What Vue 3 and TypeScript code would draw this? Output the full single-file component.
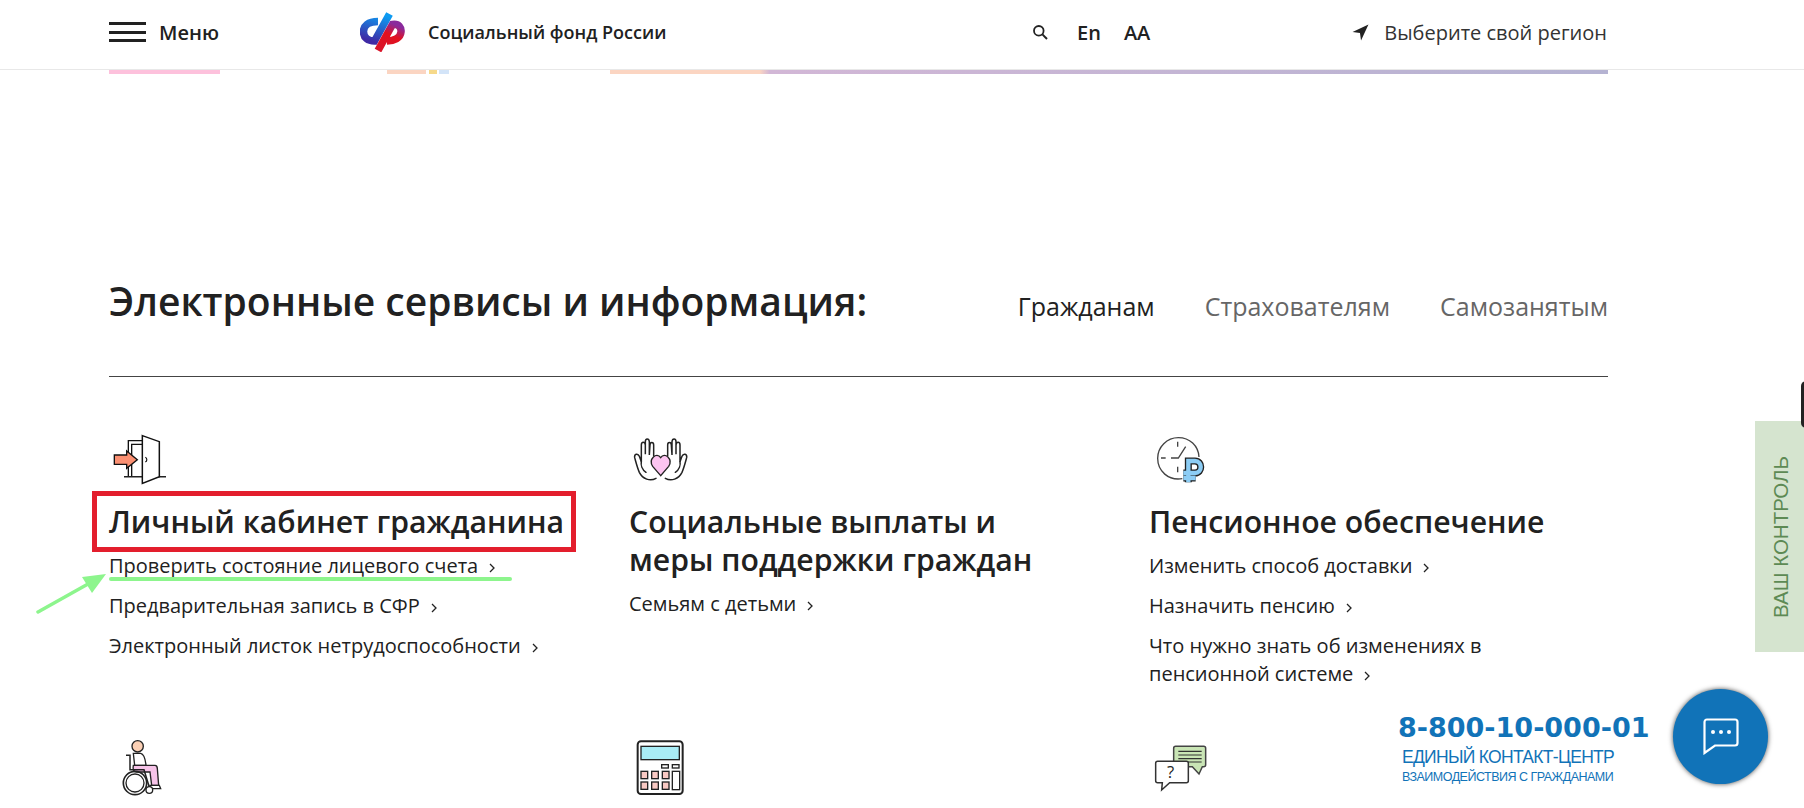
<script setup lang="ts">
interface Service {
  icon: string
  title: string[]
  links: string[][]
  marked?: boolean
}

const services: Service[] = [
  {
    icon: 'door',
    title: ['Личный кабинет гражданина'],
    links: [['Проверить состояние лицевого счета'], ['Предварительная запись в СФР'], ['Электронный листок нетрудоспособности']],
    marked: true,
  },
  {
    icon: 'hands',
    title: ['Социальные выплаты и', 'меры поддержки граждан'],
    links: [['Семьям с детьми']],
  },
  {
    icon: 'clock',
    title: ['Пенсионное обеспечение'],
    links: [['Изменить способ доставки'], ['Назначить пенсию'], ['Что нужно знать об изменениях в', 'пенсионной системе']],
  },
]

const tabs = ['Гражданам', 'Страхователям', 'Самозанятым']
const calcKeys = [63, 95, 127].flatMap((x) => [130, 162].map((y) => ({ x, y })))
</script>

<template>
  <div class="page">
    <header class="topbar">
      <div class="topbar-inner">
        <div class="menu">
          <span class="burger"><i></i><i></i><i></i></span>
          <span>Меню</span>
        </div>
        <div class="brand">
          <svg class="logo" viewBox="0 0 45 40" width="45" height="40">
            <defs>
              <linearGradient id="logo-blue" x1="0.6" y1="0" x2="0.3" y2="1">
                <stop offset="0" stop-color="#0d9bf2" />
                <stop offset="1" stop-color="#3f2aa5" />
              </linearGradient>
              <linearGradient id="logo-red" x1="0.7" y1="0" x2="0.3" y2="1">
                <stop offset="0" stop-color="#8a2a9c" />
                <stop offset="0.4" stop-color="#e3101f" />
                <stop offset="1" stop-color="#d9152a" />
              </linearGradient>
            </defs>
            <path d="M18 9.500 C8 9.500 3.500 14 3.500 19.500 C3.500 26 8 29 14.500 29 L29.500 2" fill="none" stroke="url(#logo-blue)" stroke-width="7.500" />
            <path d="M18 38.500 L32.500 12.500 C39 11.500 41.500 16 41 20 C40.500 26 34 29 27 29" fill="none" stroke="url(#logo-red)" stroke-width="7.500" />
          </svg>
          <span>Социальный фонд России</span>
        </div>
        <div class="tools">
          <svg viewBox="0 0 16 16" width="16" height="16">
            <circle cx="6.800" cy="6.800" r="4.800" fill="none" stroke="#222" stroke-width="1.800" />
            <path d="M10.400 10.400 L15 15" stroke="#222" stroke-width="2" />
          </svg>
          <span class="lang">En</span>
          <span class="lang">АА</span>
        </div>
        <div class="region">
          <svg viewBox="0 0 16 16" width="17" height="17">
            <path d="M15.500 0.500 L0.500 7.500 L7.500 8.500 L8.500 15.500 Z" fill="#222" />
          </svg>
          <span>Выберите свой регион</span>
        </div>
      </div>
    </header>

    <div class="strip">
      <span class="seg seg-pink"></span>
      <span class="seg seg-peach"></span>
      <span class="seg-badge"><i></i><b></b></span>
      <span class="seg seg-long"></span>
    </div>

    <main class="content">
      <div class="section-head">
        <h2>Электронные сервисы и информация:</h2>
        <nav class="tabs">
          <a v-for="(tab, i) in tabs" :key="tab" :class="{ active: i === 0 }">{{ tab }}</a>
        </nav>
      </div>

      <div class="grid">
        <section v-for="item in services" :key="item.icon" class="service">
          <svg v-if="item.icon === 'door'" class="pic" viewBox="0 0 240 195" width="80" height="65">
            <path d="M85 155 V47 H127 M95 155 V58 H127" fill="none" stroke="#111" stroke-width="4" />
            <path d="M72 155 H198" stroke="#222" stroke-width="4.500" />
            <path d="M127 32 L178 50 V155 L127 175 Z" fill="#fff" stroke="#111" stroke-width="4.500" />
            <path d="M136 97 C142 100 142 108 136 111" fill="none" stroke="#111" stroke-width="3.500" />
            <path d="M43 90 H80 V78 L112 104 L80 130 V118 H43 Z" fill="#fb9072" stroke="#111" stroke-width="4" />
          </svg>

          <svg v-else-if="item.icon === 'hands'" class="pic" viewBox="0 0 240 195" width="80" height="65">
            <g fill="none" stroke="#222" stroke-width="4.500" stroke-linecap="round">
              <path d="M108 160 C90 170 68 162 58 142 C52 128 48 112 44 98 C42 86 54 84 58 94 L64 110 L64 60 C64 49 75 49 76 60 L76 88 L76 50 C76 39 87 39 88 50 L88 90 L90 60 C90 50 101 50 101 60 L101 92" />
              <path d="M64 110 C62 120 66 134 78 142" />
            </g>
            <g fill="none" stroke="#222" stroke-width="4.500" stroke-linecap="round" transform="translate(244 0) scale(-1 1)">
              <path d="M108 160 C90 170 68 162 58 142 C52 128 48 112 44 98 C42 86 54 84 58 94 L64 110 L64 60 C64 49 75 49 76 60 L76 88 L76 50 C76 39 87 39 88 50 L88 90 L90 60 C90 50 101 50 101 60 L101 92" />
              <path d="M64 110 C62 120 66 134 78 142" />
            </g>
            <path d="M122 152 L98 124 C84 102 110 80 122 98 C134 80 160 102 146 124 Z" fill="#fcc4f0" stroke="#222" stroke-width="4" />
          </svg>

          <svg v-else class="pic pic-clock" viewBox="0 0 240 195" width="80" height="65">
            <path d="M112 161 C70 168 38 138 38 100 C38 66 66 38 100 38 C134 38 160 62 162 96" fill="none" stroke="#444" stroke-width="4" />
            <path d="M98 50 V65 M48 99 H62 M98 125 V142 M78 99 H100 L122 65" fill="none" stroke="#444" stroke-width="4" />
            <path d="M130 172 V108 H150 C173 108 173 144 150 144 H115 M115 159 H152" fill="none" stroke="#222" stroke-width="21" />
            <path d="M130 172 V108 H150 C173 108 173 144 150 144 H115 M115 159 H152" fill="none" stroke="#8ccdf5" stroke-width="13" />
          </svg>

          <div class="title-wrap">
            <h3>
              <template v-for="(line, i) in item.title" :key="line"><br v-if="i" />{{ line }}</template>
            </h3>
            <span v-if="item.marked" class="red-frame"></span>
          </div>

          <ul class="links">
            <li v-for="link in item.links" :key="link[0]">
              <a>
                <template v-for="(line, i) in link" :key="line"><br v-if="i" />{{ line }}</template>
                <svg class="chevron" viewBox="0 0 6 10" width="6" height="10">
                  <path d="M1 1 L5 5 L1 9" fill="none" stroke="#222" stroke-width="1.300" />
                </svg>
              </a>
            </li>
          </ul>

          <template v-if="item.marked">
            <span class="green-line"></span>
            <svg class="green-arrow" viewBox="0 0 72 42" width="72" height="42">
              <path d="M2 40 L52 12" stroke="#8df58d" stroke-width="3.500" stroke-linecap="round" />
              <path d="M70 2 L46 5 L56 21 Z" fill="#8df58d" />
            </svg>
          </template>
        </section>

        <section class="service">
          <svg class="pic" viewBox="0 0 240 234" width="80" height="78">
            <circle cx="113" cy="55" r="17" fill="#fbd0b5" stroke="#222" stroke-width="4" />
            <path d="M100 76 H122 C132 78 136 92 138 112 H104 Z" fill="#fff" stroke="#222" stroke-width="4" />
            <path d="M100 112 H165 C170 112 172 116 172 122 L176 172 H155 L150 132 H110 C100 132 98 122 100 112 Z" fill="#f6c3e8" stroke="#222" stroke-width="4" />
            <path d="M150 172 H178 L182 182 H150 Z" fill="#fff" stroke="#222" stroke-width="4" />
            <path d="M78 82 H90 V125 H132 L148 178" fill="none" stroke="#222" stroke-width="4.500" />
            <circle cx="105" cy="165" r="35" fill="none" stroke="#222" stroke-width="5" />
            <circle cx="105" cy="165" r="27" fill="none" stroke="#222" stroke-width="4" />
            <circle cx="148" cy="186" r="10" fill="#fff" stroke="#222" stroke-width="4" />
          </svg>
        </section>

        <section class="service">
          <svg class="pic" viewBox="0 0 240 234" width="80" height="78">
            <rect x="53" y="40" width="135" height="158" rx="10" fill="#fff" stroke="#222" stroke-width="6" />
            <rect x="63" y="55" width="115" height="40" fill="#a9ecf5" stroke="#222" stroke-width="4" />
            <rect x="125" y="110" width="20" height="10" fill="#fff" stroke="#222" stroke-width="4" />
            <rect x="157" y="110" width="20" height="10" fill="#fff" stroke="#222" stroke-width="4" />
            <rect x="157" y="130" width="22" height="55" fill="#fff" stroke="#222" stroke-width="4" />
            <rect v-for="key in calcKeys" :key="`${key.x}-${key.y}`" :x="key.x" :y="key.y" width="20" height="22" fill="#f9c9c3" stroke="#222" stroke-width="4" />
          </svg>
        </section>

        <section class="service">
          <svg class="pic pic-clock" viewBox="0 0 240 234" width="80" height="78">
            <path d="M92 55 H176 C180 55 182 57 182 61 V110 C182 114 180 116 176 116 H172 L162 138 L142 116 H92 C88 116 86 114 86 110 V61 C86 57 88 55 92 55 Z" fill="#c9e5b5" stroke="#444" stroke-width="4.500" />
            <path d="M100 70 H170 M100 81 H170 M100 92 H170 M100 102 H170" stroke="#333" stroke-width="3.500" />
            <path d="M38 100 H124 C128 100 130 102 130 106 V158 C130 162 128 164 124 164 H74 L50 186 L52 164 H38 C34 164 32 162 32 158 V106 C32 102 34 100 38 100 Z" fill="#fff" stroke="#333" stroke-width="4.500" />
            <text x="66" y="150" class="pic-mark">?</text>
          </svg>
        </section>
      </div>
    </main>

    <div class="control-tab"><span>ВАШ КОНТРОЛЬ</span></div>
    <span class="edge-handle"></span>

    <div class="hotline">
      <strong>8-800-10-000-01</strong>
      <span class="hotline-main">ЕДИНЫЙ КОНТАКТ-ЦЕНТР</span>
      <span class="hotline-sub">ВЗАИМОДЕЙСТВИЯ С ГРАЖДАНАМИ</span>
    </div>

    <button class="chat" type="button" aria-label="Чат">
      <svg viewBox="0 0 36 37" width="36" height="37">
        <path d="M4 1.500 H32 C33.500 1.500 34.500 2.500 34.500 4 V25 C34.500 26.500 33.500 27.500 32 27.500 H12 L1.500 35 V4 C1.500 2.500 2.500 1.500 4 1.500 Z" fill="none" stroke="#fff" stroke-width="2.200" />
        <circle cx="10" cy="14" r="2" fill="#fff" />
        <circle cx="18" cy="14" r="2" fill="#fff" />
        <circle cx="26" cy="14" r="2" fill="#fff" />
      </svg>
    </button>
  </div>
</template>

<style scoped>
.page {
  position: relative;
  height: 808px;
  overflow: hidden;
  background: #fff;
  color: #212121;
  font-family: "Open Sans", "Noto Sans", sans-serif;
}

.topbar {
  height: 69px;
  border-bottom: 1px solid #e8e8e8;
}

.topbar-inner {
  width: 1498px;
  height: 100%;
  margin-left: 109px;
  padding-bottom: 5px;
  box-sizing: border-box;
  display: flex;
  align-items: center;
}

.menu {
  width: 251px;
  display: flex;
  align-items: center;
  gap: 13px;
  font-size: 20px;
  font-weight: 600;
}

.burger {
  width: 37px;
  height: 20px;
  display: flex;
  flex-direction: column;
  justify-content: space-between;
}

.burger i {
  height: 3px;
  background: #212121;
}

.brand {
  width: 672px;
  display: flex;
  align-items: center;
  gap: 23px;
  font-size: 18px;
  font-weight: 600;
}

.logo {
  flex: none;
}

.tools {
  display: flex;
  align-items: center;
  font-size: 20px;
  font-weight: 600;
}

.lang {
  margin-left: 29px;
}

.lang + .lang {
  margin-left: 23px;
}

.region {
  margin-left: auto;
  display: flex;
  align-items: center;
  gap: 15px;
  font-size: 20px;
  color: #333;
}

.strip {
  width: 1499px;
  height: 4px;
  margin-left: 109px;
  display: flex;
}

.seg-pink {
  width: 111px;
  margin-right: 167px;
  background: #fdc1dc;
}

.seg-peach {
  width: 39px;
  background: #fbd5c2;
}

.seg-badge {
  width: 184px;
  box-sizing: border-box;
  display: flex;
  gap: 2px;
  padding-left: 3px;
}

.seg-badge i {
  width: 8px;
  background: #f6d98a;
}

.seg-badge b {
  width: 10px;
  background: #d3e4f8;
}

.seg-long {
  flex: 1;
  background: linear-gradient(90deg, #fbd5c2 0, #fbd5c2 15%, #d2b7d6 16%, #b5b3d2 100%);
}

.content {
  width: 1499px;
  margin-left: 109px;
}

.section-head {
  height: 303px;
  display: flex;
  justify-content: space-between;
  align-items: flex-end;
  padding-bottom: 49px;
  box-sizing: border-box;
  border-bottom: 1px solid #444;
}

h2 {
  margin: 0;
  font-size: 39px;
  font-weight: 600;
  line-height: 52px;
}

.tabs {
  display: flex;
  gap: 50px;
  font-size: 25px;
  line-height: 42px;
  color: #666;
}

.tabs .active {
  color: #212121;
}

.grid {
  display: grid;
  grid-template-columns: repeat(3, 460px);
  column-gap: 60px;
  row-gap: 40px;
  padding-top: 48px;
}

.service {
  position: relative;
}

.pic {
  display: block;
  margin-left: -9px;
}

.pic-clock {
  margin-left: -4px;
}

.pic-mark {
  font-family: "Open Sans", sans-serif;
  font-size: 50px;
  fill: #222;
}

.title-wrap {
  position: relative;
  margin-top: 13px;
}

h3 {
  margin: 0;
  font-size: 30.2px;
  font-weight: 600;
  line-height: 38px;
  white-space: nowrap;
}

.red-frame {
  position: absolute;
  left: -17px;
  top: -12px;
  width: 484px;
  height: 61px;
  box-sizing: border-box;
  border: 5px solid #e31e2d;
}

.links {
  margin: 11px 0 0;
  padding: 0;
  list-style: none;
  display: flex;
  flex-direction: column;
  gap: 12px;
  font-size: 20px;
  line-height: 28px;
}

.chevron {
  margin-left: 11px;
}

.green-line {
  position: absolute;
  left: 0;
  top: 152px;
  width: 403px;
  height: 4px;
  border-radius: 2px;
  background: #8df58d;
}

.green-arrow {
  position: absolute;
  left: -73px;
  top: 147px;
}

.control-tab {
  position: absolute;
  left: 1755px;
  top: 421px;
  width: 49px;
  height: 231px;
  padding-left: 3px;
  box-sizing: border-box;
  display: flex;
  align-items: center;
  justify-content: center;
  background: #d5e4cf;
  color: #5d8a54;
  font-family: "Liberation Sans", Arial, sans-serif;
  font-size: 20.5px;
}

.control-tab span {
  writing-mode: vertical-rl;
  transform: rotate(180deg);
}

.edge-handle {
  position: absolute;
  left: 1801px;
  top: 381px;
  width: 10px;
  height: 47px;
  border-radius: 6px;
  background: #222;
}

.hotline {
  position: absolute;
  left: 1398px;
  top: 712px;
  display: flex;
  flex-direction: column;
  color: #1173b8;
  font-family: "Liberation Sans", Arial, sans-serif;
}

.hotline strong {
  font-family: "DejaVu Sans", Verdana, sans-serif;
  font-size: 27px;
  font-weight: 700;
  line-height: 32px;
}

.hotline-main {
  margin: 2px 0 0 4px;
  font-size: 17.5px;
  letter-spacing: -0.7px;
  line-height: 22px;
}

.hotline-sub {
  margin: 1px 0 0 4px;
  font-size: 12.5px;
  letter-spacing: -0.5px;
  line-height: 16px;
}

.chat {
  position: absolute;
  left: 1673px;
  top: 689px;
  width: 95px;
  height: 95px;
  padding: 0;
  display: flex;
  align-items: center;
  justify-content: center;
  border: none;
  border-radius: 50%;
  background: #1173b8;
  box-shadow: 0 0 5px rgba(0, 0, 0, 0.7);
}
</style>
